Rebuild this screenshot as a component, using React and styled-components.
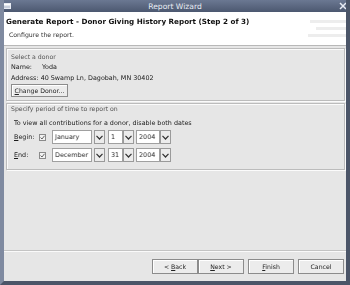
import React from "react";
import styled, { createGlobalStyle } from "styled-components";

const GlobalStyle = createGlobalStyle`
  html, body {
    margin: 0;
    padding: 0;
    background: #fff;
  }
  body {
    font-family: "DejaVu Sans", Verdana, sans-serif;
    font-size: 6.4px;
    color: #1a1a1a;
  }
`;

const Window = styled.div`
  width: 350px;
  height: 285px;
  box-sizing: border-box;
  display: flex;
  flex-direction: column;
  background: #e6e6e6;
  border-left: 4px solid #7f8aa0;
  border-right: 4px solid #4b5568;
  border-bottom: 4px solid #4b5568;
  overflow: hidden;
`;

const TitleBar = styled.div`
  height: 12px;
  margin: 0 -4px;
  flex: none;
  display: flex;
  align-items: center;
  justify-content: space-between;
  padding: 0 3px;
  background: linear-gradient(#6b7892, #4c5870);
  color: #e8ecf4;
  font-size: 7.6px;
`;

const TitleText = styled.span`
  flex: 1;
  text-align: center;
`;

const Header = styled.div`
  height: 34px;
  flex: none;
  background: #fff;
  border-bottom: 1px solid #b8b8b8;
  position: relative;
  padding: 5px 0 0 2px;
  box-sizing: border-box;
  filter: grayscale(1);
`;

const HeaderTitle = styled.div`
  font-weight: bold;
  font-size: 7.2px;
  color: #111;
`;

const HeaderSub = styled.div`
  margin: 5px 0 0 3px;
  font-size: 6.2px;
  color: #333;
`;

const Stripes = styled.div`
  position: absolute;
  right: 0;
  top: 8px;
  display: flex;
  flex-direction: column;
  align-items: flex-end;
  gap: 4px;
`;

const Stripe = styled.div`
  height: 3px;
  width: ${(p) => p.w}px;
  background: #ededed;
`;

const Body = styled.div`
  flex: 1;
  display: flex;
  flex-direction: column;
  padding: 2px 1px 0 2px;
  filter: grayscale(1);
`;

const Group = styled.div`
  border: 1px solid #bcbcbc;
  box-shadow: inset 1px 1px 0 #fbfbfb, 1px 1px 0 #fbfbfb;
  padding: ${(p) => p.pad};
  display: flex;
  flex-direction: column;
  margin-bottom: 2px;
`;

const GroupLabel = styled.div`
  font-size: 6.2px;
  color: #555;
  height: ${(p) => p.h}px;
  line-height: 8px;
`;

const Line = styled.div`
  height: 11px;
  line-height: 11px;
  padding-left: ${(p) => p.indent || 0}px;
  display: flex;
  white-space: nowrap;
`;

const Key = styled.span`
  width: ${(p) => p.w}px;
  flex: none;
`;

const PushButton = styled.div`
  height: ${(p) => p.h || 14}px;
  width: ${(p) => p.w}px;
  box-sizing: border-box;
  border: 1px solid #8c8c8c;
  background: #ececec;
  box-shadow: inset 1px 1px 0 #fff;
  display: flex;
  align-items: center;
  justify-content: center;
  font-size: 6.2px;
  color: #222;
  white-space: nowrap;
`;

const U = styled.span`
  text-decoration: underline;
`;

const DateRow = styled.div`
  display: flex;
  align-items: center;
  height: 14px;
  margin-top: ${(p) => p.mt}px;
  padding-left: 3px;
`;

const RowLabel = styled.span`
  width: 25px;
  flex: none;
`;

const Check = styled.div`
  width: 7px;
  height: 7px;
  box-sizing: border-box;
  border: 1px solid #8a8a8a;
  background: #f2f2f2;
  margin-right: 6px;
  display: flex;
  align-items: center;
  justify-content: center;
`;

const Combo = styled.div`
  display: flex;
  align-items: center;
  margin-right: ${(p) => p.mr}px;
`;

const ComboField = styled.div`
  width: ${(p) => p.w}px;
  height: 14px;
  box-sizing: border-box;
  border: 1px solid #a0a0a0;
  background: #fff;
  padding-left: 2px;
  line-height: 12px;
  margin-right: ${(p) => p.gap}px;
  color: #333;
`;

const ComboButton = styled.div`
  width: 11px;
  height: 14px;
  box-sizing: border-box;
  border: 1px solid #9a9a9a;
  background: #ececec;
  display: flex;
  align-items: center;
  justify-content: center;
`;

const Spacer = styled.div`
  flex: 1;
`;

const Footer = styled.div`
  border-top: 1px solid #c4c4c4;
  box-shadow: inset 0 1px 0 #fafafa;
  height: 31px;
  flex: none;
  margin: 0 -1px 0 -2px;
  display: flex;
  justify-content: flex-end;
  align-items: flex-start;
  padding: 8px 2px 0 0;
  box-sizing: border-box;
`;

const ButtonGap = styled.div`
  width: ${(p) => p.w}px;
`;

const Chevron = () => (
  <svg width="7" height="5" viewBox="0 0 7 5">
    <path d="M0.5 0.8 L3.5 4 L6.5 0.8" fill="none" stroke="#333" strokeWidth="1.2" />
  </svg>
);

const Tick = () => (
  <svg width="5" height="5" viewBox="0 0 5 5">
    <path d="M0.5 2.5 L2 4 L4.5 0.8" fill="none" stroke="#555" strokeWidth="0.9" />
  </svg>
);

const DateCombo = ({ value, w, gap, mr }) => (
  <Combo mr={mr}>
    <ComboField w={w} gap={gap}>
      {value}
    </ComboField>
    <ComboButton>
      <Chevron />
    </ComboButton>
  </Combo>
);

const DateLine = ({ label, month, day, year, mt }) => (
  <DateRow mt={mt}>
    <RowLabel>
      <U>{label[0]}</U>
      {label.slice(1)}
    </RowLabel>
    <Check>
      <Tick />
    </Check>
    <DateCombo value={month} w={40} gap={2} mr={3} />
    <DateCombo value={day} w={15} gap={0} mr={2} />
    <DateCombo value={year} w={24} gap={0} mr={0} />
  </DateRow>
);

export default function App() {
  return (
    <>
      <GlobalStyle />
      <Window>
        <TitleBar>
          <svg width="8" height="6" viewBox="0 0 8 6">
            <rect x="0.5" y="0.5" width="7" height="5" fill="#c9d0dd" stroke="#e8ecf4" />
            <rect x="1" y="1" width="6" height="1.5" fill="#fff" />
          </svg>
          <TitleText>Report Wizard</TitleText>
          <svg width="8" height="8" viewBox="0 0 8 8">
            <path d="M1 1 L7 7 M7 1 L1 7" stroke="#e8ecf4" strokeWidth="1.5" />
          </svg>
        </TitleBar>
        <Header>
          <HeaderTitle>Generate Report - Donor Giving History Report (Step 2 of 3)</HeaderTitle>
          <HeaderSub>Configure the report.</HeaderSub>
          <Stripes>
            <Stripe w={36} />
            <Stripe w={30} />
            <Stripe w={38} />
          </Stripes>
        </Header>
        <Body>
          <Group pad="4px 0 3px 4px">
            <GroupLabel h={9}>Select a donor</GroupLabel>
            <Line>
              <Key w={31}>Name:</Key>
              <span>Yoda</span>
            </Line>
            <Line>Address: 40 Swamp Ln, Dagobah, MN 30402</Line>
            <PushButton w={57} h={13}>
              <span>
                <U>C</U>hange Donor...
              </span>
            </PushButton>
          </Group>
          <Group pad="1px 0 7px 4px">
            <GroupLabel h={13}>Specify period of time to report on</GroupLabel>
            <Line indent={3}>To view all contributions for a donor, disable both dates</Line>
            <DateLine label="Begin:" month="January" day="1" year="2004" mt={1} />
            <DateLine label="End:" month="December" day="31" year="2004" mt={4} />
          </Group>
          <Spacer />
          <Footer>
            <PushButton w={46} h={15}>
              <span>
                &lt; <U>B</U>ack
              </span>
            </PushButton>
            <PushButton w={46} h={15}>
              <span>
                <U>N</U>ext &gt;
              </span>
            </PushButton>
            <ButtonGap w={4} />
            <PushButton w={46} h={15}>
              <span>
                <U>F</U>inish
              </span>
            </PushButton>
            <ButtonGap w={4} />
            <PushButton w={46} h={15}>Cancel</PushButton>
          </Footer>
        </Body>
      </Window>
    </>
  );
}
